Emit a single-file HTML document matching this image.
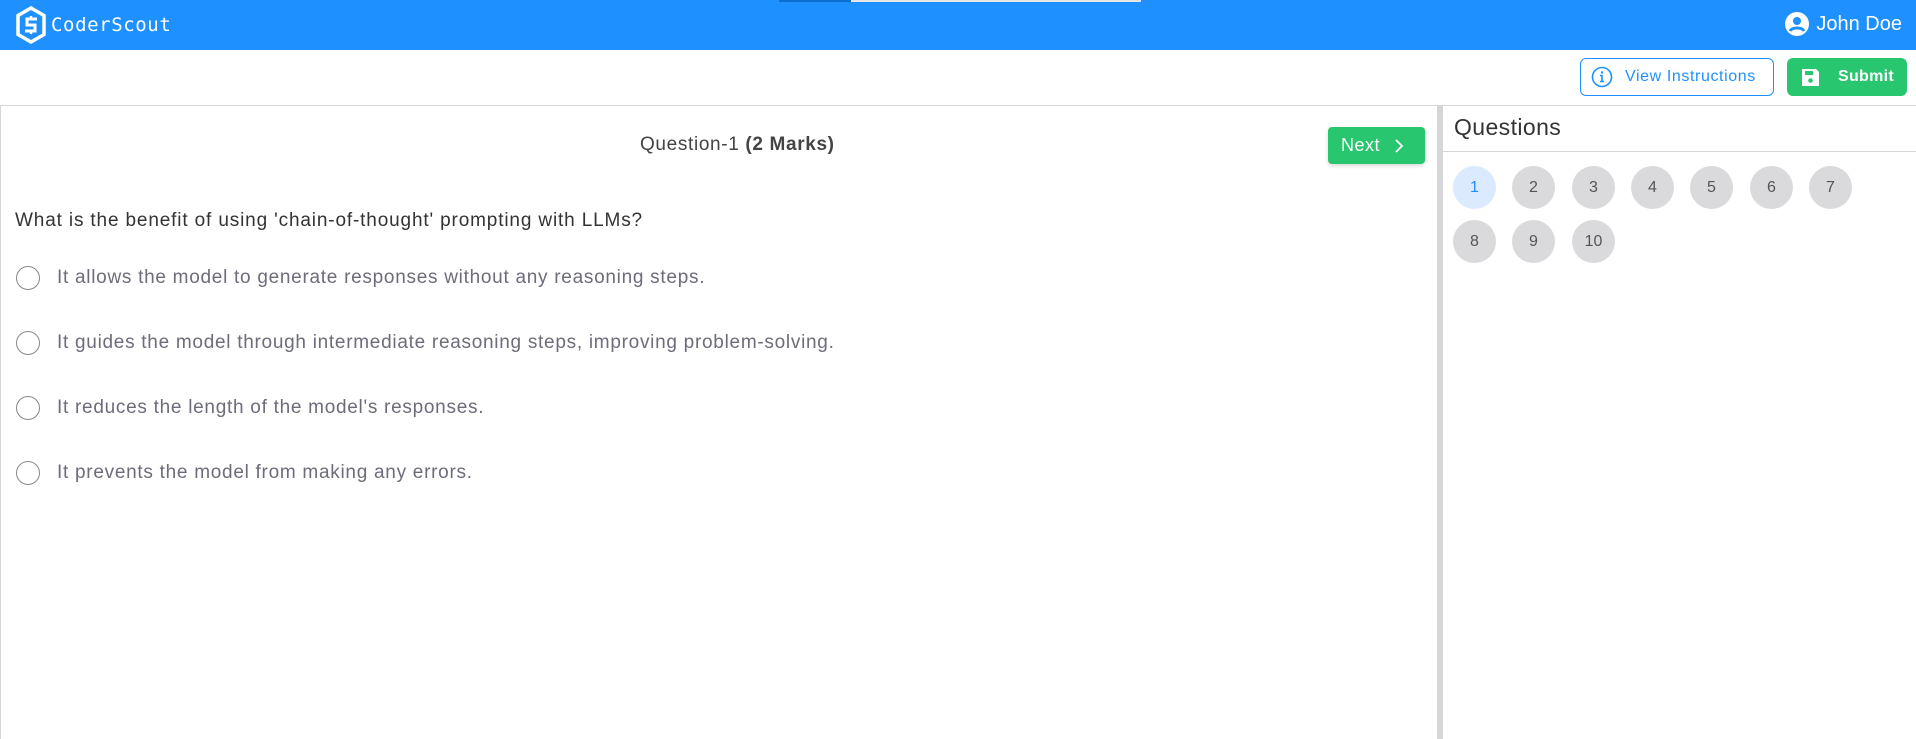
<!DOCTYPE html>
<html><head><meta charset="utf-8"><style>
*{box-sizing:border-box;margin:0;padding:0}
body{width:1916px;height:739px;overflow:hidden;background:#fff;font-family:"Liberation Sans",sans-serif;position:relative}
.hdr{position:absolute;left:0;top:0;width:1916px;height:50px;background:#1f90ff}
.abs{position:absolute}
.logo{left:51px;top:14px;color:#fff;font-size:19px;letter-spacing:0.6px;font-family:"DejaVu Sans Mono","Liberation Mono",monospace}
.user{right:14px;top:12px;color:#fff;font-size:20px;display:flex;align-items:center;gap:7px}
.vi{left:1580px;top:58px;width:194px;height:38px;border:1px solid #1f90ff;border-radius:6px;color:#1f90ff;font-size:16px;display:flex;align-items:center;padding-left:10px;gap:12px;letter-spacing:.6px}
.sb{left:1787px;top:58px;width:120px;height:38px;background:#28c76f;border-radius:6px;color:#fff;font-size:16px;font-weight:bold;display:flex;align-items:center;padding-left:14px;gap:18px;letter-spacing:.3px}
.panel{left:0;top:105px;width:1916px;height:634px;border-top:1px solid #d6d6d6;border-left:1px solid #d6d6d6}
.div{left:1437px;top:106px;width:6px;height:633px;background:#d6d6d9}
.qh{left:640px;top:134px;font-size:19px;color:#444;letter-spacing:.65px}
.next{left:1328px;top:127px;width:97px;height:37px;background:#28c76f;border-radius:4px;color:#fff;font-size:18px;display:flex;align-items:center;padding-left:13px;gap:14px;box-shadow:0 2px 4px rgba(0,0,0,.15);letter-spacing:.5px}
.q{left:15px;top:210px;font-size:19px;color:#333;letter-spacing:.85px}
.opt{left:16px;display:flex;align-items:center;font-size:19px;color:#6e6b7b;letter-spacing:.72px}
.opt i{width:24px;height:24px;border:1.5px solid #888;border-radius:50%;margin-right:17px}
.qt{left:1454px;top:114px;font-size:23px;color:#333;letter-spacing:.4px}
.ql{left:1443px;top:151px;width:473px;height:1px;background:#d6d6d6}
.c{width:43px;height:43px;border-radius:50%;background:#dadadd;color:#555;font-size:16px;display:flex;align-items:center;justify-content:center}
</style></head><body>
<div class="hdr"></div>
<div class="abs" style="left:779px;top:0;width:72px;height:2px;background:#0a6fd0"></div>
<div class="abs" style="left:851px;top:0;width:290px;height:2px;background:#e5e5e5"></div>
<svg class="abs" style="left:15px;top:6px" width="32" height="38" viewBox="0 0 32 38"><path d="M16 2 L29 9.5 V28.5 L16 36 L3 28.5 V9.5 Z" fill="none" stroke="#fff" stroke-width="3.5"/><path d="M22 13 H12 V19 H20 V25 H10" fill="none" stroke="#fff" stroke-width="3"/><path d="M16 10v3M16 25v3" stroke="#fff" stroke-width="2.5"/></svg>
<div class="abs logo">CoderScout</div>
<div class="abs user"><svg width="24" height="24" viewBox="0 0 24 24"><circle cx="12" cy="12" r="12" fill="#fff"/><circle cx="12" cy="9" r="4" fill="#1f90ff"/><path d="M5 19c2-4 12-4 14 0" stroke="#1f90ff" stroke-width="3" fill="none"/></svg>John Doe</div>
<div class="abs vi"><svg width="22" height="22" viewBox="0 0 22 22"><circle cx="11" cy="11" r="9.5" fill="none" stroke="#1f90ff" stroke-width="1.6"/><circle cx="11" cy="6.5" r="1.2" fill="#1f90ff"/><path d="M9 9.5h2v6M9 15.5h4" stroke="#1f90ff" stroke-width="1.6" fill="none"/></svg>View Instructions</div>
<div class="abs sb"><svg width="19" height="19" viewBox="0 0 19 19"><path d="M1 1h14l3 3v14H1z" fill="#fff"/><rect x="4" y="3" width="8" height="4" fill="#28c76f"/><circle cx="9.5" cy="12.5" r="2.3" fill="#28c76f"/></svg>Submit</div>
<div class="abs panel"></div>
<div class="abs div"></div>
<div class="abs qh">Question-1 <b>(2 Marks)</b></div>
<div class="abs next">Next<svg width="10" height="16" viewBox="0 0 10 16"><path d="M2 2l6 6-6 6" stroke="#fff" stroke-width="1.8" fill="none"/></svg></div>
<div class="abs q">What is the benefit of using 'chain-of-thought' prompting with LLMs?</div>
<div class="abs opt" style="top:266px"><i></i>It allows the model to generate responses without any reasoning steps.</div>
<div class="abs opt" style="top:331px"><i></i>It guides the model through intermediate reasoning steps, improving problem-solving.</div>
<div class="abs opt" style="top:396px"><i></i>It reduces the length of the model's responses.</div>
<div class="abs opt" style="top:461px"><i></i>It prevents the model from making any errors.</div>
<div class="abs qt">Questions</div>
<div class="abs ql"></div>
<div class="abs c" style="left:1453px;top:166px;background:#dbeafe;color:#1f90ff">1</div>
<div class="abs c" style="left:1512px;top:166px">2</div>
<div class="abs c" style="left:1572px;top:166px">3</div>
<div class="abs c" style="left:1631px;top:166px">4</div>
<div class="abs c" style="left:1690px;top:166px">5</div>
<div class="abs c" style="left:1750px;top:166px">6</div>
<div class="abs c" style="left:1809px;top:166px">7</div>
<div class="abs c" style="left:1453px;top:220px">8</div>
<div class="abs c" style="left:1512px;top:220px">9</div>
<div class="abs c" style="left:1572px;top:220px">10</div>
</body></html>
